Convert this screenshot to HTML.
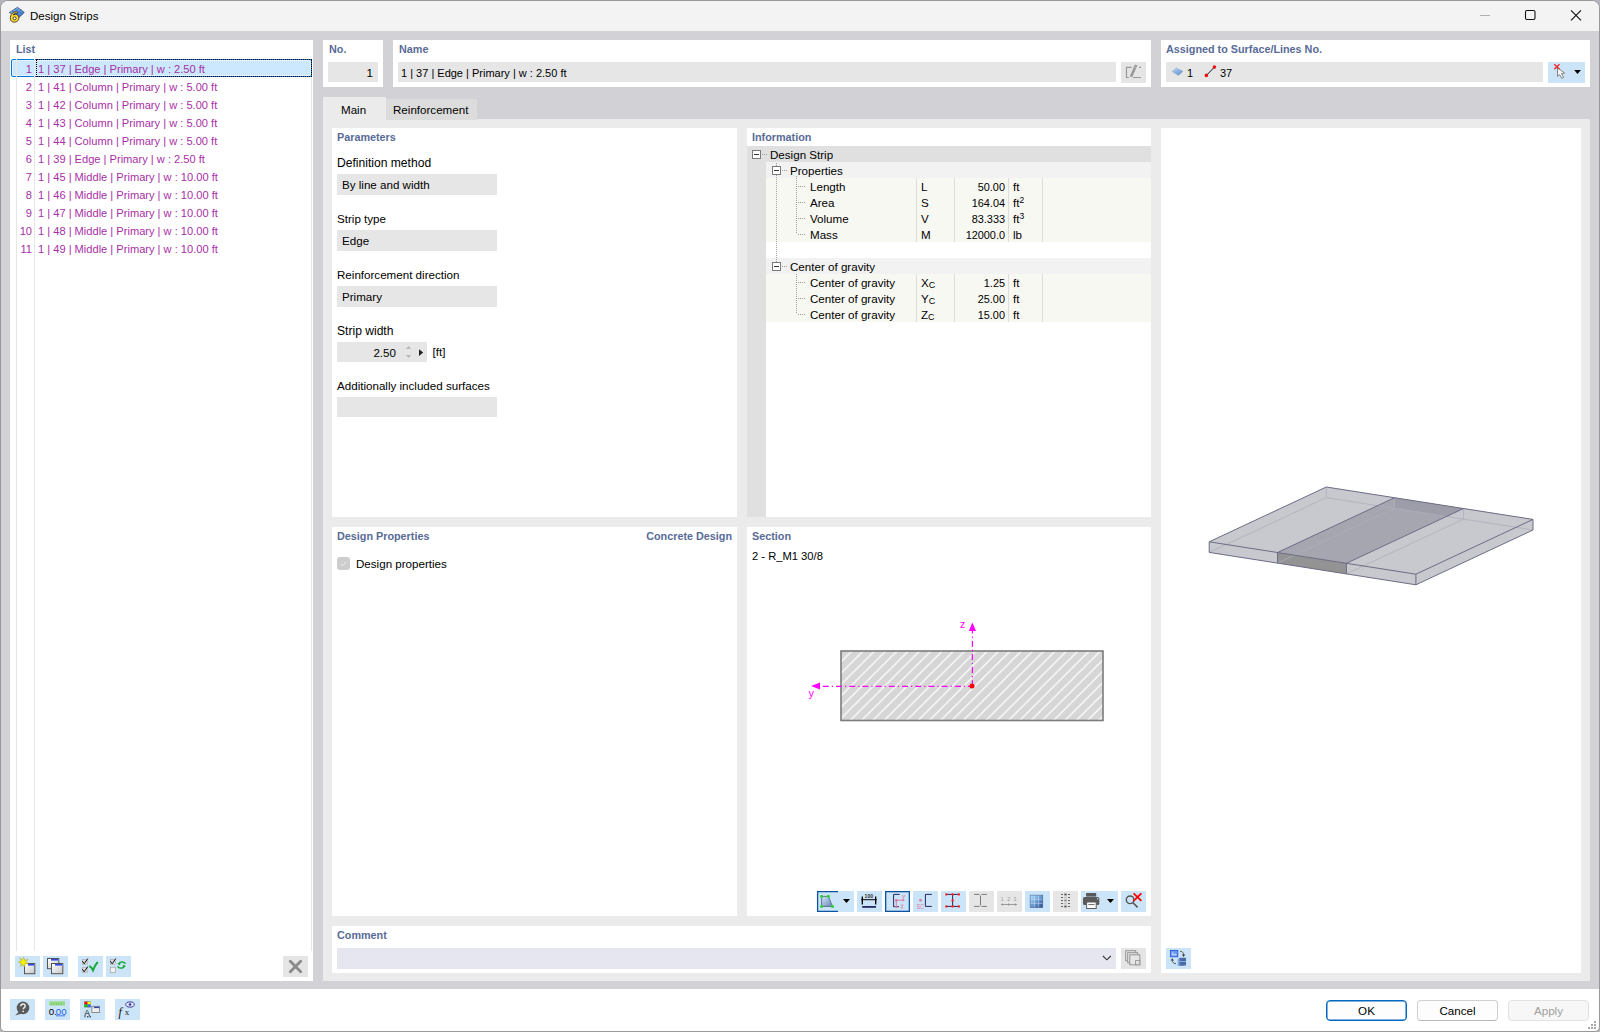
<!DOCTYPE html>
<html><head><meta charset="utf-8">
<style>
*{box-sizing:border-box;margin:0;padding:0}
html,body{width:1600px;height:1032px;overflow:hidden;background:#b4b4bc}
body{position:relative;font-family:"Liberation Sans",sans-serif;font-size:12px;color:#000}
.a{position:absolute}
.t{position:absolute;font-size:11.6px;line-height:16px;white-space:nowrap}
.h{position:absolute;font-size:10.8px;line-height:16px;font-weight:bold;color:#586b98;white-space:nowrap}
.w{position:absolute;background:#fff}
.in{position:absolute;background:#e6e6e6}
.btn{position:absolute;background:#cce4f7}
.dis{position:absolute;background:#e5e5e5}
.li{position:absolute;left:38px;font-size:11.1px;line-height:16px;color:#a82fa6;white-space:nowrap}
.ln{position:absolute;width:20px;left:12px;text-align:right;font-size:11.1px;line-height:16px;color:#a82fa6}
.tr{position:absolute;font-size:12px;line-height:16px;white-space:nowrap}
sup{font-size:8.5px;vertical-align:4px;line-height:0}
sub{font-size:9px;vertical-align:-1px;line-height:0}
</style></head><body>
<!-- window -->
<div id="win" class="a" style="left:0;top:0;width:1600px;height:1032px;background:#ffffff;border:1px solid #999;border-radius:8px 8px 5px 5px;overflow:hidden">
</div>
<!-- title bar -->
<div class="a" style="left:1px;top:1px;width:1598px;height:30px;background:#f3f3f3;border-radius:7px 7px 0 0"></div>
<div class="t" style="left:30px;top:8px;font-size:11.5px">Design Strips</div>
<svg class="a" style="left:6px;top:4px" width="22" height="22" viewBox="6 4 22 22">
<defs><linearGradient id="ig" x1="0" y1="0" x2="1" y2="1"><stop offset="0" stop-color="#a8d8ff"/><stop offset="1" stop-color="#2a62c8"/></linearGradient></defs>
<path d="M9.2 12.6 L17.5 7.3 L24.3 12.4 L19.3 17.2 L13 14.2 Z" fill="url(#ig)" stroke="#30405a" stroke-width="0.7"/>
<path d="M12 11 L20.5 15.5 M14.5 9.2 L22.5 13.8 M12.2 13.2 L19 8.5 M15.5 14.5 L21.5 9.8" stroke="#3a70c8" stroke-width="0.8" opacity="0.8"/>
<path d="M17.8 12.2 C15.2 10.8 10.6 12.8 10.3 17.8 C10.1 20.6 11.8 22.2 14.3 22.2 C17 22.2 18.9 20.4 18.9 18 C18.9 15.6 17.2 14.3 15.2 14.3 C14.4 14.3 13.7 14.6 13.2 15 C13.8 13.6 15.4 12.8 17.3 13.5 Z" fill="#ffd526" stroke="#2a2a2a" stroke-width="0.8"/>
<circle cx="14.6" cy="18.3" r="1.5" fill="#fff" stroke="#333" stroke-width="0.9"/>
</svg>
<svg class="a" style="left:1470px;top:5px" width="120" height="22" viewBox="1470 5 120 22">
<line x1="1480" y1="15.5" x2="1490" y2="15.5" stroke="#b0b0b0" stroke-width="1"/>
<rect x="1525.5" y="10.5" width="9.5" height="9" rx="1.5" fill="none" stroke="#111" stroke-width="1.1"/>
<path d="M1571 10.3 L1581 20.3 M1581 10.3 L1571 20.3" stroke="#111" stroke-width="1.1"/>
</svg>
<!-- body gray -->
<div class="a" style="left:1px;top:31px;width:1598px;height:958px;background:#d1d1d6"></div>

<!-- List panel -->
<div class="w" style="left:10px;top:40px;width:303px;height:941px"></div>
<div class="h" style="left:16px;top:41px">List</div>
<svg class="a" style="left:10px;top:950px" width="303" height="31" viewBox="10 950 303 31">
<g fill="#cce4f7"><rect x="15" y="956" width="25" height="21"/><rect x="43" y="956" width="25" height="21"/><rect x="78" y="956" width="25" height="21"/><rect x="106" y="956" width="25" height="21"/></g>
<rect x="283" y="956" width="25" height="21" fill="#e5e5e5"/>
<defs><linearGradient id="wg" x1="0" y1="0" x2="1" y2="1"><stop offset="0" stop-color="#fff"/><stop offset="1" stop-color="#c8c8c8"/></linearGradient></defs>
<rect x="24.5" y="963.5" width="10.3" height="10.2" fill="url(#wg)" stroke="#555" stroke-width="1"/>
<rect x="25" y="964" width="9.3" height="1.6" fill="#fff"/><rect x="28" y="964" width="6.3" height="1.6" fill="#3048e8"/>
<path d="M23.6 957.3 L24.8 960.3 L28 959.3 L25.8 961.8 L28.3 963.8 L25 963.9 L24.6 967 L23 964.6 L20.5 966.3 L21.3 963.3 L18.5 962.2 L21.5 960.8 L19.8 958.3 L22.6 959.7 Z" fill="#f8f000" stroke="#8a8a30" stroke-width="0.4"/>
<rect x="47.5" y="958.5" width="11.3" height="10.2" fill="url(#wg)" stroke="#555" stroke-width="1"/>
<rect x="48" y="959" width="10.3" height="1.6" fill="#fff"/><rect x="51" y="959" width="7.3" height="1.6" fill="#3048e8"/>
<rect x="51.5" y="963.5" width="11.3" height="10.2" fill="url(#wg)" stroke="#555" stroke-width="1"/>
<rect x="52" y="964" width="10.3" height="1.6" fill="#fff"/><rect x="55" y="964" width="7.3" height="1.6" fill="#3048e8"/>
<rect x="82.3" y="959.3" width="5.2" height="5.2" fill="#d8d8d8" stroke="#aaa" stroke-width="0.6"/>
<rect x="82.3" y="967.3" width="5.2" height="5.2" fill="#d8d8d8" stroke="#aaa" stroke-width="0.6"/>
<path d="M82.3 961.2 L84.2 963.8 L87.8 958.5 M82.3 969.2 L84.2 971.8 L87.8 966.5" fill="none" stroke="#111" stroke-width="1"/>
<path d="M89.3 966.2 C90.5 966.5 92 968 93 970.3 C94.5 966.5 96 963.8 97.8 962" fill="none" stroke="#1aaa40" stroke-width="2"/>
<rect x="110.3" y="959.3" width="5.2" height="5.2" fill="#d8d8d8" stroke="#aaa" stroke-width="0.6"/>
<rect x="110.3" y="967.3" width="5.2" height="5.2" fill="#f0f0f0" stroke="#aaa" stroke-width="0.8"/>
<path d="M110.3 961.2 L112.2 963.8 L115.8 958.5" fill="none" stroke="#111" stroke-width="1"/>
<path d="M125.5 963.8 C124.5 961.5 120.5 961.3 118.8 963.5" fill="none" stroke="#1aaa40" stroke-width="1.5"/>
<path d="M117.2 963.8 L120.8 962.2 L119.8 965.5 Z" fill="#1aaa40"/>
<path d="M117.6 966.3 C118.5 968.6 122.5 968.8 124.3 966.5" fill="none" stroke="#1aaa40" stroke-width="1.5"/>
<path d="M126 966.2 L122.5 967.8 L123.4 964.6 Z" fill="#1aaa40"/>
<path d="M290.3 961.3 L300.7 971.7 M300.7 961.3 L290.3 971.7" stroke="#8a8a8a" stroke-width="2.8" stroke-linecap="round"/>
</svg>
<div class="a" style="left:11px;top:59px;width:301px;height:18px;background:#cce8ff;border:1px solid #0078d4;border-radius:2px;box-shadow:inset 0 0 0 1px #e6f3ff"></div>
<div class="a" style="left:36px;top:59px;width:276px;height:18px;border:1px dotted #000"></div>
<div class="a" style="left:16px;top:59px;width:1px;height:892px;background:#e6e6e6"></div>
<div class="a" style="left:34px;top:59px;width:1px;height:892px;background:#e6e6e6"></div>
<div class="a" style="left:311px;top:77px;width:1px;height:874px;background:#e6e6e6"></div>
<div class="ln" style="top:61px">1</div><div class="li" style="top:61px">1 | 37 | Edge | Primary | w : 2.50 ft</div>
<div class="ln" style="top:79px">2</div><div class="li" style="top:79px">1 | 41 | Column | Primary | w : 5.00 ft</div>
<div class="ln" style="top:97px">3</div><div class="li" style="top:97px">1 | 42 | Column | Primary | w : 5.00 ft</div>
<div class="ln" style="top:115px">4</div><div class="li" style="top:115px">1 | 43 | Column | Primary | w : 5.00 ft</div>
<div class="ln" style="top:133px">5</div><div class="li" style="top:133px">1 | 44 | Column | Primary | w : 5.00 ft</div>
<div class="ln" style="top:151px">6</div><div class="li" style="top:151px">1 | 39 | Edge | Primary | w : 2.50 ft</div>
<div class="ln" style="top:169px">7</div><div class="li" style="top:169px">1 | 45 | Middle | Primary | w : 10.00 ft</div>
<div class="ln" style="top:187px">8</div><div class="li" style="top:187px">1 | 46 | Middle | Primary | w : 10.00 ft</div>
<div class="ln" style="top:205px">9</div><div class="li" style="top:205px">1 | 47 | Middle | Primary | w : 10.00 ft</div>
<div class="ln" style="top:223px">10</div><div class="li" style="top:223px">1 | 48 | Middle | Primary | w : 10.00 ft</div>
<div class="ln" style="top:241px">11</div><div class="li" style="top:241px">1 | 49 | Middle | Primary | w : 10.00 ft</div>

<!-- No panel -->
<div class="w" style="left:323px;top:40px;width:60px;height:47px"></div>
<div class="h" style="left:329px;top:41px">No.</div>
<div class="in" style="left:328px;top:62px;width:50px;height:20px"></div>
<div class="t" style="left:328px;top:65px;width:45px;text-align:right">1</div>

<!-- Name panel -->
<div class="w" style="left:393px;top:40px;width:758px;height:47px"></div>
<div class="h" style="left:399px;top:41px">Name</div>
<div class="in" style="left:398px;top:62px;width:718px;height:20px"></div>
<div class="t" style="left:401px;top:65px;font-size:11px">1 | 37 | Edge | Primary | w : 2.50 ft</div>
<div class="dis" style="left:1121px;top:62px;width:25px;height:21px"></div>
<svg class="a" style="left:1121px;top:62px" width="25" height="21" viewBox="1121 62 25 21">
<path d="M1131.7 67.4 L1126.5 67.4 L1126.5 77.5 L1128.8 77.5" fill="none" stroke="#999" stroke-width="1.2"/>
<path d="M1139 67.4 L1141 67.4 M1133 77.5 L1141 77.5" stroke="#999" stroke-width="1.2"/>
<path d="M1136.2 65 L1131 76.8" stroke="#999" stroke-width="2.6"/>
<path d="M1135.3 67.5 L1136.8 68.2" stroke="#e6e6e6" stroke-width="0.6"/>
</svg>

<!-- Assigned panel -->
<div class="w" style="left:1161px;top:40px;width:429px;height:47px"></div>
<div class="h" style="left:1166px;top:41px">Assigned to Surface/Lines No.</div>
<div class="in" style="left:1166px;top:62px;width:377px;height:20px"></div>
<div class="btn" style="left:1548px;top:62px;width:37px;height:21px"></div>
<svg class="a" style="left:1166px;top:62px" width="70" height="20" viewBox="1166 62 70 20">
<defs><linearGradient id="sg" x1="0" y1="0" x2="1" y2="1"><stop offset="0" stop-color="#b8dcf8"/><stop offset="1" stop-color="#5a88c0"/></linearGradient></defs>
<path d="M1172 71.5 L1176.3 68 L1183 71.2 L1178.4 75.5 Z" fill="url(#sg)" stroke="#7aa0c8" stroke-width="0.4"/>
<line x1="1206.4" y1="75.4" x2="1214.4" y2="67.1" stroke="#111" stroke-width="1"/>
<circle cx="1206.4" cy="75.4" r="1.8" fill="#ee1111"/><circle cx="1214.4" cy="67.1" r="1.8" fill="#ee1111"/>
</svg>
<div class="t" style="left:1187px;top:65px;font-size:11px">1</div>
<div class="t" style="left:1220px;top:65px;font-size:11px">37</div>
<svg class="a" style="left:1548px;top:62px" width="37" height="21" viewBox="1548 62 37 21">
<path d="M1557.4 67.5 L1557.6 76.5 L1559.6 74.6 L1561.8 78.4 L1563.6 77.4 L1561.5 73.6 L1564.6 73.1 Z" fill="#f6f6f6" stroke="#6a6a6a" stroke-width="0.8" stroke-linejoin="round"/>
<path d="M1554.3 64.3 L1559.5 69.3 M1559.5 64.3 L1554.3 69.3" stroke="#ee2020" stroke-width="1.2"/>
<path d="M1574.2 70.1 L1580.9 70.1 L1577.55 73.9 Z" fill="#000"/>
</svg>

<!-- content area -->
<div class="a" style="left:323px;top:119px;width:1267px;height:862px;background:#ebebeb"></div>
<div class="a" style="left:323px;top:97px;width:63px;height:23px;background:#ebebeb"></div>
<div class="a" style="left:386px;top:99px;width:91px;height:21px;background:#dcdcdc"></div>
<div class="t" style="left:341px;top:102px">Main</div>
<div class="t" style="left:393px;top:102px">Reinforcement</div>

<!-- Parameters -->
<div class="w" style="left:332px;top:128px;width:405px;height:389px"></div>
<div class="h" style="left:337px;top:129px">Parameters</div>
<div class="t" style="left:337px;top:155px;font-size:12.1px">Definition method</div>
<div class="in" style="left:337px;top:174px;width:160px;height:21px"></div>
<div class="t" style="left:342px;top:177px">By line and width</div>
<div class="t" style="left:337px;top:211px">Strip type</div>
<div class="in" style="left:337px;top:230px;width:160px;height:21px"></div>
<div class="t" style="left:342px;top:233px">Edge</div>
<div class="t" style="left:337px;top:267px">Reinforcement direction</div>
<div class="in" style="left:337px;top:286px;width:160px;height:21px"></div>
<div class="t" style="left:342px;top:289px">Primary</div>
<div class="t" style="left:337px;top:323px;font-size:12.1px">Strip width</div>
<div class="in" style="left:337px;top:342px;width:90px;height:20px"></div>
<div class="t" style="left:350px;top:345px;width:46px;text-align:right">2.50</div>
<svg class="a" style="left:400px;top:342px" width="28" height="20" viewBox="400 342 28 20">
<path d="M408.5 345.9 L411.1 348.9 L405.9 348.9 Z" fill="#b8b8b8"/>
<path d="M408.5 357.9 L411.1 354.9 L405.9 354.9 Z" fill="#b8b8b8"/>
<path d="M419 349.2 L423.2 352.6 L419 356 Z" fill="#222"/>
</svg>
<div class="t" style="left:432.5px;top:344px">[ft]</div>
<div class="t" style="left:337px;top:378px">Additionally included surfaces</div>
<div class="in" style="left:337px;top:397px;width:160px;height:20px"></div>


<!-- Information -->
<div class="w" style="left:747px;top:128px;width:404px;height:389px"></div>
<div class="h" style="left:752px;top:129px">Information</div>
<div class="a" style="left:747px;top:146px;width:19px;height:371px;background:#e0e0e0"></div>
<div class="a" style="left:747px;top:146px;width:404px;height:16px;background:#e0e0e0"></div>
<div class="a" style="left:766px;top:162px;width:385px;height:16px;background:#f2f2f2"></div>
<div class="a" style="left:766px;top:178px;width:385px;height:64px;background:#f8f8f3"></div>
<div class="a" style="left:766px;top:258px;width:385px;height:16px;background:#f2f2f2"></div>
<div class="a" style="left:766px;top:274px;width:385px;height:48px;background:#f8f8f3"></div>
<div class="a" style="left:916px;top:178px;width:1px;height:64px;background:#dcdcdc"></div>
<div class="a" style="left:916px;top:274px;width:1px;height:48px;background:#dcdcdc"></div>
<div class="a" style="left:954px;top:178px;width:1px;height:64px;background:#dcdcdc"></div>
<div class="a" style="left:954px;top:274px;width:1px;height:48px;background:#dcdcdc"></div>
<div class="a" style="left:1008px;top:178px;width:1px;height:64px;background:#dcdcdc"></div>
<div class="a" style="left:1008px;top:274px;width:1px;height:48px;background:#dcdcdc"></div>
<div class="a" style="left:1042px;top:178px;width:1px;height:64px;background:#dcdcdc"></div>
<div class="a" style="left:1042px;top:274px;width:1px;height:48px;background:#dcdcdc"></div>
<svg class="a" style="left:747px;top:146px" width="404" height="180" viewBox="0 0 404 180"><rect x="5.5" y="4.5" width="8" height="8" fill="#fff" stroke="#7a7a7a"/><line x1="7" y1="8.5" x2="12" y2="8.5" stroke="#333"/><line x1="15" y1="8.5" x2="20" y2="8.5" stroke="#a0a0a0" stroke-dasharray="1 1"/><line x1="29.5" y1="17" x2="29.5" y2="120" stroke="#a0a0a0" stroke-dasharray="1 1"/><rect x="25.5" y="20.5" width="8" height="8" fill="#fff" stroke="#7a7a7a"/><line x1="27" y1="24.5" x2="32" y2="24.5" stroke="#333"/><line x1="35" y1="24.5" x2="41" y2="24.5" stroke="#a0a0a0" stroke-dasharray="1 1"/><rect x="25.5" y="116.5" width="8" height="8" fill="#fff" stroke="#7a7a7a"/><line x1="27" y1="120.5" x2="32" y2="120.5" stroke="#333"/><line x1="35" y1="120.5" x2="41" y2="120.5" stroke="#a0a0a0" stroke-dasharray="1 1"/><line x1="49.5" y1="30" x2="49.5" y2="88" stroke="#a0a0a0" stroke-dasharray="1 1"/><line x1="51" y1="40.5" x2="59" y2="40.5" stroke="#a0a0a0" stroke-dasharray="1 1"/><line x1="51" y1="56.5" x2="59" y2="56.5" stroke="#a0a0a0" stroke-dasharray="1 1"/><line x1="51" y1="72.5" x2="59" y2="72.5" stroke="#a0a0a0" stroke-dasharray="1 1"/><line x1="51" y1="88.5" x2="59" y2="88.5" stroke="#a0a0a0" stroke-dasharray="1 1"/><line x1="49.5" y1="128" x2="49.5" y2="168" stroke="#a0a0a0" stroke-dasharray="1 1"/><line x1="51" y1="136.5" x2="59" y2="136.5" stroke="#a0a0a0" stroke-dasharray="1 1"/><line x1="51" y1="152.5" x2="59" y2="152.5" stroke="#a0a0a0" stroke-dasharray="1 1"/><line x1="51" y1="168.5" x2="59" y2="168.5" stroke="#a0a0a0" stroke-dasharray="1 1"/></svg>
<div class="t" style="left:770px;top:147px">Design Strip</div>
<div class="t" style="left:790px;top:163px">Properties</div>
<div class="t" style="left:790px;top:259px">Center of gravity</div>
<div class="t" style="left:810px;top:179px">Length</div>
<div class="t" style="left:921px;top:179px">L</div>
<div class="t" style="left:955px;top:179px;width:50px;text-align:right;font-size:10.9px">50.00</div>
<div class="t" style="left:1013px;top:179px">ft</div>
<div class="t" style="left:810px;top:195px">Area</div>
<div class="t" style="left:921px;top:195px">S</div>
<div class="t" style="left:955px;top:195px;width:50px;text-align:right;font-size:10.9px">164.04</div>
<div class="t" style="left:1013px;top:195px">ft<sup>2</sup></div>
<div class="t" style="left:810px;top:211px">Volume</div>
<div class="t" style="left:921px;top:211px">V</div>
<div class="t" style="left:955px;top:211px;width:50px;text-align:right;font-size:10.9px">83.333</div>
<div class="t" style="left:1013px;top:211px">ft<sup>3</sup></div>
<div class="t" style="left:810px;top:227px">Mass</div>
<div class="t" style="left:921px;top:227px">M</div>
<div class="t" style="left:955px;top:227px;width:50px;text-align:right;font-size:10.9px">12000.0</div>
<div class="t" style="left:1013px;top:227px">lb</div>
<div class="t" style="left:810px;top:275px">Center of gravity</div>
<div class="t" style="left:921px;top:275px">X<sub>C</sub></div>
<div class="t" style="left:955px;top:275px;width:50px;text-align:right;font-size:10.9px">1.25</div>
<div class="t" style="left:1013px;top:275px">ft</div>
<div class="t" style="left:810px;top:291px">Center of gravity</div>
<div class="t" style="left:921px;top:291px">Y<sub>C</sub></div>
<div class="t" style="left:955px;top:291px;width:50px;text-align:right;font-size:10.9px">25.00</div>
<div class="t" style="left:1013px;top:291px">ft</div>
<div class="t" style="left:810px;top:307px">Center of gravity</div>
<div class="t" style="left:921px;top:307px">Z<sub>C</sub></div>
<div class="t" style="left:955px;top:307px;width:50px;text-align:right;font-size:10.9px">15.00</div>
<div class="t" style="left:1013px;top:307px">ft</div>

<!-- 3D panel -->
<div class="w" style="left:1161px;top:128px;width:420px;height:845px"></div>
<svg id="v3d" class="a" style="left:1161px;top:128px" width="420" height="844" viewBox="1161 128 420 844">
<polygon points="1209.2,552.4 1209.2,541.8 1326.3,487.0 1533.0,519.4 1533.0,530.0 1415.9,584.8" fill="#c8c8cf"/>
<polygon points="1277.5,552.5 1394.6,497.7 1463.5,508.5 1346.4,563.3" fill="#a6a6b1"/>
<polygon points="1394.6,497.7 1463.5,508.5 1463.5,519.1 1394.6,508.3" fill="#9d9da9"/>
<polygon points="1346.4,563.3 1463.5,508.5 1533.0,519.4 1415.9,574.2" fill="#c8c8cf"/>
<polygon points="1277.5,552.5 1346.4,563.3 1346.4,573.9 1277.5,563.1" fill="#939394"/>
<line x1="1209.2" y1="552.4" x2="1326.3" y2="497.6" stroke="#afafbd" stroke-width="0.8"/>
<line x1="1326.3" y1="487.0" x2="1326.3" y2="497.6" stroke="#afafbd" stroke-width="0.8"/>
<line x1="1326.3" y1="497.6" x2="1533.0" y2="530.0" stroke="#afafbd" stroke-width="0.8"/>
<line x1="1277.5" y1="563.1" x2="1394.6" y2="508.3" stroke="#afafbd" stroke-width="0.8"/>
<line x1="1346.4" y1="573.9" x2="1463.5" y2="519.1" stroke="#afafbd" stroke-width="0.8"/>
<line x1="1394.6" y1="497.7" x2="1394.6" y2="508.3" stroke="#afafbd" stroke-width="0.8"/>
<line x1="1463.5" y1="508.5" x2="1463.5" y2="519.1" stroke="#afafbd" stroke-width="0.8"/>
<line x1="1209.2" y1="541.8" x2="1326.3" y2="487.0" stroke="#6c6c84" stroke-width="1"/>
<line x1="1326.3" y1="487.0" x2="1533.0" y2="519.4" stroke="#6c6c84" stroke-width="1"/>
<line x1="1533.0" y1="519.4" x2="1533.0" y2="530.0" stroke="#6c6c84" stroke-width="1"/>
<line x1="1533.0" y1="530.0" x2="1415.9" y2="584.8" stroke="#6c6c84" stroke-width="1"/>
<line x1="1415.9" y1="574.2" x2="1415.9" y2="584.8" stroke="#6c6c84" stroke-width="1"/>
<line x1="1209.2" y1="541.8" x2="1209.2" y2="552.4" stroke="#6c6c84" stroke-width="1"/>
<line x1="1209.2" y1="552.4" x2="1415.9" y2="584.8" stroke="#6c6c84" stroke-width="1"/>
<line x1="1209.2" y1="541.8" x2="1415.9" y2="574.2" stroke="#6c6c84" stroke-width="1"/>
<line x1="1415.9" y1="574.2" x2="1533.0" y2="519.4" stroke="#6c6c84" stroke-width="1"/>
<line x1="1277.5" y1="552.5" x2="1394.6" y2="497.7" stroke="#6c6c84" stroke-width="1"/>
<line x1="1346.4" y1="563.3" x2="1463.5" y2="508.5" stroke="#6c6c84" stroke-width="1"/>
<line x1="1277.5" y1="552.5" x2="1277.5" y2="563.1" stroke="#6c6c84" stroke-width="1"/>
<line x1="1346.4" y1="563.3" x2="1346.4" y2="573.9" stroke="#6c6c84" stroke-width="1"/>
</svg>

<!-- Design properties -->
<div class="w" style="left:332px;top:527px;width:405px;height:389px"></div>
<div class="h" style="left:337px;top:528px">Design Properties</div>
<div class="h" style="left:600px;top:528px;width:132px;text-align:right">Concrete Design</div>
<div class="a" style="left:337px;top:557px;width:13px;height:13px;background:#cdcdcd;border-radius:3px"></div>
<svg class="a" style="left:337px;top:557px" width="13" height="13"><path d="M3.5 6.8 L5.5 8.8 L9.5 4.5" fill="none" stroke="#f0f0f0" stroke-width="1"/></svg>
<div class="t" style="left:356px;top:556px">Design properties</div>


<!-- Section -->
<div class="w" style="left:747px;top:527px;width:404px;height:389px"></div>
<div class="h" style="left:752px;top:528px">Section</div>
<div class="t" style="left:752px;top:548px;font-size:11.2px">2 - R_M1 30/8</div>
<svg class="a" style="left:815px;top:889px" width="335" height="25" viewBox="815 889 335 25">
<g fill="#cce4f7">
<rect x="817" y="891" width="37" height="21"/><rect x="857" y="891" width="25" height="21"/><rect x="885" y="891" width="25" height="21"/>
<rect x="913" y="891" width="25" height="21"/><rect x="941" y="891" width="25" height="21"/><rect x="1025" y="891" width="25" height="21"/>
<rect x="1081" y="891" width="37" height="21"/><rect x="1121" y="891" width="25" height="21"/>
</g>
<g fill="#e6e6e6"><rect x="969" y="891" width="25" height="21"/><rect x="997" y="891" width="25" height="21"/><rect x="1053" y="891" width="25" height="21"/></g>
<path d="M838 891.6 L817.6 891.6 L817.6 911.4 L838 911.4" fill="none" stroke="#0d54a0" stroke-width="1.3"/>
<defs><linearGradient id="tg" x1="0" y1="0" x2="1" y2="1"><stop offset="0" stop-color="#d0e4f8"/><stop offset="1" stop-color="#6a88b8"/></linearGradient>
<linearGradient id="gg" x1="0" y1="0" x2="1" y2="1"><stop offset="0" stop-color="#b8e4ff"/><stop offset="0.5" stop-color="#6a9ad0"/><stop offset="1" stop-color="#2a4a88"/></linearGradient></defs>
<path d="M821.6 896.4 L828.4 896.4 L832.5 906.4 L821.6 906.4 Z" fill="url(#tg)" stroke="#4a5a80" stroke-width="0.8"/>
<g fill="#33d140"><circle cx="821.6" cy="896.4" r="1.6"/><circle cx="828.4" cy="896.4" r="1.6"/><circle cx="832.5" cy="906.4" r="1.6"/><circle cx="821.6" cy="906.4" r="1.6"/></g>
<path d="M843 899 L850 899 L846.5 903 Z" fill="#000"/>
<text x="864.6" y="898" font-family="Liberation Sans" font-size="5" font-weight="bold" fill="#333" textLength="8.5" lengthAdjust="spacingAndGlyphs">100</text>
<path d="M862.5 899.7 L875.5 899.7" stroke="#000" stroke-width="1"/>
<path d="M862.3 896.5 L862.3 904.5 M875.7 896.5 L875.7 904.5" stroke="#000" stroke-width="1.3"/>
<path d="M861 899.7 L863 898 L863 901.4 Z M877 899.7 L875 898 L875 901.4 Z" fill="#000"/>
<rect x="862.2" y="906" width="13.8" height="1.8" fill="#262a60"/>
<rect x="885.65" y="891.65" width="23.7" height="19.7" fill="none" stroke="#0d54a0" stroke-width="1.3"/>
<path d="M899.7 894.4 L893.6 894.4 L893.6 906.7 L899 906.7" fill="none" stroke="#262a60" stroke-width="1"/>
<path d="M896.3 900.2 L903.5 900.2 M896.3 900.2 L896.3 907" stroke="#e070a0" stroke-width="0.9"/>
<path d="M905 900.2 L902.5 898.8 L902.5 901.6 Z M896.3 908.5 L895 906 L897.6 906 Z" fill="#e070a0"/>
<circle cx="896.3" cy="900.2" r="1.3" fill="#e070a0"/>
<path d="M902.3 895 L903.6 897.5 L905.2 895 M903.6 897.5 L902.8 899" fill="none" stroke="#e070a0" stroke-width="0.7"/>
<path d="M900.8 905 L903.2 905 L900.8 908 L903.2 908" fill="none" stroke="#e070a0" stroke-width="0.7"/>
<circle cx="920.5" cy="900.3" r="1.3" fill="#e070a0"/>
<text x="916.8" y="908.6" font-family="Liberation Sans" font-size="6.8" fill="#e070a0" textLength="7" lengthAdjust="spacingAndGlyphs">SC</text>
<path d="M931.8 894.4 L925.4 894.4 L925.4 906.4 L931.8 906.4" fill="none" stroke="#262a60" stroke-width="1"/>
<path d="M946.4 894.4 L958.8 894.4 M946.4 906.4 L958.8 906.4 M952.6 894.4 L952.6 906.4" stroke="#262a60" stroke-width="1"/>
<g fill="#ff1a1a"><circle cx="946.4" cy="894.4" r="1.2"/><circle cx="952.6" cy="894.4" r="1.2"/><circle cx="958.8" cy="894.4" r="1.2"/><circle cx="952.6" cy="900.4" r="1.2"/><circle cx="946.4" cy="906.4" r="1.2"/><circle cx="952.6" cy="906.4" r="1.2"/><circle cx="958.8" cy="906.4" r="1.2"/></g>
<path d="M974.1 894.4 L979.6 894.4 M981.4 894.4 L986.9 894.4 M974.1 906.4 L979.6 906.4 M981.4 906.4 L986.9 906.4 M980.5 895.5 L980.5 905.5" stroke="#7a7a7a" stroke-width="1"/>
<text x="1000.8" y="901" font-family="Liberation Sans" font-size="5.2" fill="#9a9a9a">1</text>
<text x="1007.2" y="901" font-family="Liberation Sans" font-size="5.2" fill="#9a9a9a">2</text>
<text x="1013.6" y="901" font-family="Liberation Sans" font-size="5.2" fill="#9a9a9a">3</text>
<path d="M1001.5 904.5 L1016.5 904.5 M1008.7 903.3 L1008.7 905.7" stroke="#8a8a8a" stroke-width="0.8"/>
<path d="M1001 904.5 L1002.8 903.3 L1002.8 905.7 Z M1017 904.5 L1015.2 903.3 L1015.2 905.7 Z" fill="#8a8a8a"/>
<rect x="1030.1" y="895.1" width="12.7" height="12.5" fill="url(#gg)"/>
<path d="M1034.4 895.1 L1034.4 907.6 M1038.6 895.1 L1038.6 907.6 M1030.1 899.3 L1042.8 899.3 M1030.1 903.4 L1042.8 903.4" stroke="#d8ecff" stroke-width="0.6" opacity="0.8"/>
<rect x="1030.1" y="895.1" width="12.7" height="12.5" fill="none" stroke="#3a5a90" stroke-width="0.5"/>
<g stroke="#555" stroke-width="0.9"><path d="M1061 894.5 L1063 894.5 M1068 894.5 L1070 894.5 M1061 897.5 L1063 897.5 M1068 897.5 L1070 897.5 M1061 900.5 L1063 900.5 M1068 900.5 L1070 900.5 M1061 903.5 L1063 903.5 M1068 903.5 L1070 903.5 M1061 906.5 L1063 906.5 M1068 906.5 L1070 906.5"/></g>
<g fill="#555"><rect x="1064.3" y="893.6" width="2.4" height="1.8"/><rect x="1064.3" y="899.6" width="2.4" height="1.8" fill="#888"/><rect x="1064.3" y="905.6" width="2.4" height="1.8"/></g>
<g fill="#bbb"><rect x="1064.3" y="896.6" width="2.4" height="1.8"/><rect x="1064.3" y="902.6" width="2.4" height="1.8"/></g>
<rect x="1086.1" y="893" width="10.1" height="3.6" fill="#5a5a5a"/>
<rect x="1083" y="897" width="16.3" height="8" rx="1.6" fill="#5a5a5a"/>
<rect x="1097" y="898.3" width="1.2" height="1" fill="#fff"/>
<rect x="1086.6" y="902" width="9.6" height="6.5" fill="#fff" stroke="#5a5a5a" stroke-width="1"/>
<path d="M1088.3 904.6 L1094.5 904.6" stroke="#5a5a5a" stroke-width="0.9"/>
<path d="M1107 899 L1114 899 L1110.5 903 Z" fill="#000"/>
<circle cx="1130.1" cy="899.8" r="3.8" fill="none" stroke="#555" stroke-width="1.4"/>
<path d="M1133 902.7 L1137.6 907.4" stroke="#555" stroke-width="1.6"/>
<path d="M1133.6 893.3 L1141.4 900.8 M1141.4 893.3 L1133.6 900.8" stroke="#ff0000" stroke-width="1.8"/>
</svg>

<svg class="a" style="left:747px;top:527px" width="404" height="389" viewBox="747 527 404 389">
<defs>
<clipPath id="rc"><rect x="841" y="651" width="262" height="69"/></clipPath>
<pattern id="hp" patternUnits="userSpaceOnUse" x="0" y="0" width="11.3" height="11.3">
<rect width="11.3" height="11.3" fill="#d6d6d6"/>
<path d="M-1 12.3 L12.3 -1 M-1 1 L1 -1 M10.3 12.3 L12.3 10.3" stroke="#fff" stroke-width="1.25"/>
</pattern>
</defs>
<rect x="841" y="651" width="262" height="69.5" fill="url(#hp)" stroke="#7c7c7c" stroke-width="1.6"/>
<line x1="972" y1="686.3" x2="817" y2="686.3" stroke="#ff00ff" stroke-width="1.35" stroke-dasharray="6 3 1.2 3" stroke-dashoffset="2"/>
<line x1="972.4" y1="686" x2="972.4" y2="630" stroke="#ff00ff" stroke-width="1.2" stroke-dasharray="6 3 1.2 3" stroke-dashoffset="0.3"/>
<path d="M811 686 L820 682.5 L820 689.5 Z" fill="#ff00ff"/>
<path d="M972.4 622.5 L968.8 631 L976 631 Z" fill="#ff00ff"/>
<circle cx="972" cy="686" r="2.5" fill="#ff0000"/>
<text x="960" y="628" font-family="Liberation Sans" font-size="10.5" fill="#ff00ff">z</text>
<text x="808.5" y="697" font-family="Liberation Sans" font-size="11" fill="#ff00ff">y</text>
</svg>


<!-- Comment -->
<div class="w" style="left:332px;top:926px;width:819px;height:47px"></div>
<div class="h" style="left:337px;top:927px">Comment</div>
<div class="in" style="left:337px;top:948px;width:779px;height:21px;background:#e6e6f1"></div>
<div class="dis" style="left:1121px;top:948px;width:25px;height:21px"></div>
<svg class="a" style="left:1100px;top:946px" width="100" height="24" viewBox="1100 946 100 24">
<path d="M1102.9 956 L1106.9 959.8 L1110.8 956" fill="none" stroke="#333" stroke-width="1.1"/>
<g fill="none" stroke="#949494" stroke-width="1"><rect x="1125.7" y="950.7" width="10" height="10"/><rect x="1127.7" y="952.7" width="10" height="10" fill="#e6e6e6"/><rect x="1129.8" y="954.8" width="10" height="10" fill="#e6e6e6"/><rect x="1135.6" y="960.6" width="4.2" height="4.2" fill="#f4f4f4"/></g>
<path d="M1136.8 963.6 L1138.6 961.8" stroke="#999" stroke-width="0.7"/>
<rect x="1166" y="948" width="25" height="21" fill="#cce4f7"/>
<rect x="1170.4" y="950.4" width="7.4" height="6.4" fill="#6a9af0" stroke="#2a5ae0" stroke-width="0.9"/>
<path d="M1171.8 955.5 L1171.8 952.2 L1173.3 952.2 L1173.3 953.8 L1176.5 953.8 L1176.5 955.5 Z" fill="#fff" opacity="0.5"/>
<path d="M1180 951.2 C1182.3 951.2 1183.6 952.8 1183.6 955" fill="none" stroke="#444" stroke-width="0.9"/>
<path d="M1181.8 954.6 L1183.6 957 L1185.3 954.6 Z" fill="#444"/>
<path d="M1176 963.7 C1173.5 963.7 1172.2 962 1172.2 960" fill="none" stroke="#444" stroke-width="0.9"/>
<path d="M1170.5 960.5 L1172.2 958.2 L1174 960.5 Z" fill="#444"/>
<path d="M1177.5 959.5 L1180 957.5 L1186 957.5 L1186 964 L1183.5 966 L1177.5 966 Z" fill="#8aaad8"/>
<rect x="1179.5" y="958" width="6.5" height="3" fill="#4a6aa8"/>
<rect x="1179.5" y="962" width="6.5" height="3.5" fill="#4a6aa8"/>
<path d="M1177.5 959.5 L1177.5 966" stroke="#b8d0f0" stroke-width="0.8"/>
</svg>

<!-- footer buttons -->
<svg class="a" style="left:1586px;top:1019px" width="12" height="12" viewBox="1586 1019 12 12"><g fill="#a8a8a8"><rect x="1594" y="1021" width="2" height="2"/><rect x="1591" y="1024" width="2" height="2"/><rect x="1594" y="1024" width="2" height="2"/><rect x="1588" y="1027" width="2" height="2"/><rect x="1591" y="1027" width="2" height="2"/><rect x="1594" y="1027" width="2" height="2"/></g></svg>
<svg class="a" style="left:8px;top:996px" width="140" height="28" viewBox="8 996 140 28">
<g fill="#cce4f7"><rect x="10" y="999" width="25" height="21"/><rect x="45" y="999" width="25" height="21"/><rect x="80" y="999" width="25" height="21"/><rect x="115" y="999" width="25" height="21"/></g>
<circle cx="23" cy="1007.9" r="6.3" fill="#5a5a5a"/>
<path d="M19 1011.5 L15.2 1015.6 L22 1013.5 Z" fill="#5a5a5a"/>
<path d="M20.8 1006.2 C20.8 1004.6 21.8 1003.9 23 1003.9 C24.3 1003.9 25.2 1004.7 25.2 1005.9 C25.2 1007.5 23.2 1007.7 23.2 1009.3" fill="none" stroke="#e8e8e8" stroke-width="1.5"/>
<circle cx="23.2" cy="1011.3" r="0.9" fill="#e8e8e8"/>
<rect x="49.2" y="1001.3" width="15.8" height="4.2" fill="#98dc88"/>
<path d="M51.5 1004.8 L51.5 1003.3 M54 1004.8 L54 1003.3 M56.5 1004.8 L56.5 1003.3 M59 1004.8 L59 1003.3 M61.5 1004.8 L61.5 1003.3" stroke="#60a850" stroke-width="0.6"/>
<text x="48.8" y="1014.6" font-family="Liberation Sans" font-size="9.8" fill="#000">0.</text>
<text x="55.8" y="1014.6" font-family="Liberation Sans" font-size="9.8" fill="#2a64e8">00</text>
<line x1="56" y1="1015.8" x2="65" y2="1015.8" stroke="#2a64e8" stroke-width="0.8"/>
<rect x="84.1" y="1001.3" width="6.8" height="6.2" fill="#888"/>
<rect x="84.6" y="1001.8" width="2.9" height="2.6" fill="#f00"/><rect x="87.6" y="1001.8" width="2.9" height="2.6" fill="#ff0"/>
<rect x="84.6" y="1004.5" width="2.9" height="2.6" fill="#0c0"/><rect x="87.6" y="1004.5" width="2.9" height="2.6" fill="#36f"/>
<text x="84.2" y="1015.5" font-family="Liberation Sans" font-size="8.5" fill="#111">A</text>
<path d="M84.5 1016.8 L85.5 1016.8 M87 1016.8 L88.5 1016.8 M89.5 1016.8 L91 1016.8" stroke="#111" stroke-width="1"/>
<rect x="91.8" y="1006.3" width="7.8" height="6.2" fill="#eee" stroke="#777" stroke-width="0.8"/>
<rect x="92.2" y="1006.7" width="7" height="1.4" fill="#3048b0"/><rect x="92.2" y="1006.7" width="1.8" height="1.4" fill="#ddd"/>
<text x="118.5" y="1015.5" font-family="Liberation Serif" font-style="italic" font-size="12" fill="#111">f</text>
<text x="124.8" y="1014.8" font-family="Liberation Serif" font-size="9" fill="#222">x</text>
<ellipse cx="130" cy="1004.5" rx="4.2" ry="2.6" fill="#e8e8f8" stroke="#3a3a9a" stroke-width="1"/>
<circle cx="130" cy="1004.5" r="1.3" fill="#3a3a9a"/>
</svg>
<div class="a" style="left:1326px;top:1000px;width:81px;height:21px;border:1px solid #0067c0;border-radius:4px;background:#fdfdfd;box-shadow:inset 0 0 0 0.5px #0067c0"></div>
<div class="a" style="left:1417px;top:1000px;width:81px;height:21px;border:1px solid #d0d0d0;border-bottom-color:#b8b8b8;border-radius:4px;background:#fdfdfd"></div>
<div class="a" style="left:1508px;top:1000px;width:81px;height:21px;border:1px solid #e2e2e2;border-radius:4px;background:#f7f7f7"></div>
<div class="t" style="left:1326px;top:1003px;width:81px;text-align:center">OK</div>
<div class="t" style="left:1417px;top:1003px;width:81px;text-align:center">Cancel</div>
<div class="t" style="left:1508px;top:1003px;width:81px;text-align:center;color:#a0a0a0">Apply</div>

</body></html>
